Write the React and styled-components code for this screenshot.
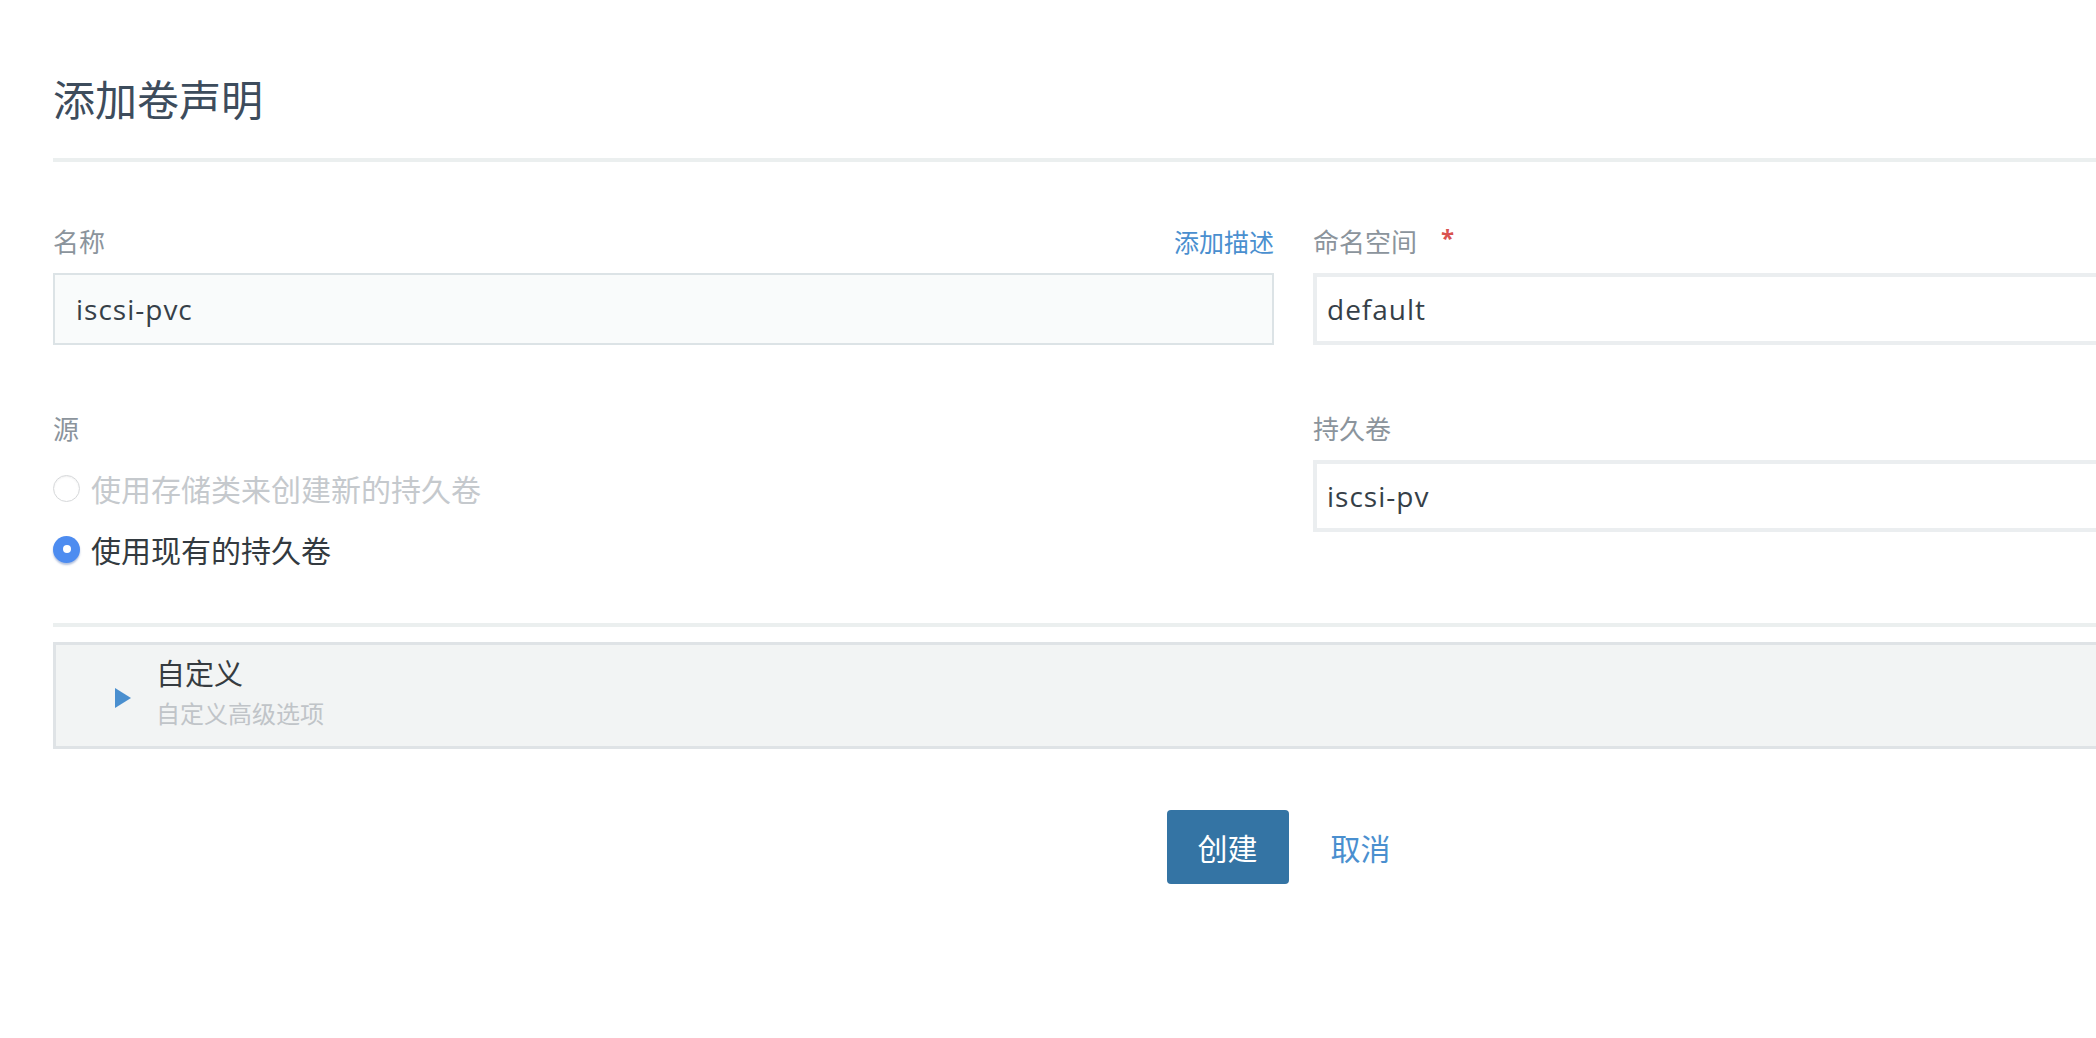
import React from "react";
import styled, { createGlobalStyle } from "styled-components";

const Global = createGlobalStyle`
  html, body { margin: 0; padding: 0; background: #fff; }
  body { overflow: hidden; width: 100vw; font-family: "Open Sans", "Noto Sans CJK SC", sans-serif; }
  #root { width: 100vw; overflow: hidden; }
`;

const CJK = `"Noto Sans CJK SC", "Noto Sans", sans-serif`;

const Page = styled.div`
  width: 2481px;
  padding: 73px 0 120px 53px;
`;

const Title = styled.h1`
  margin: 0;
  font-family: ${CJK};
  font-weight: 400;
  font-size: 42px;
  line-height: 50px;
  color: #3d4c5c;
`;

const Divider = styled.div`
  height: 4px;
  background: #ebefef;
  margin-top: ${(p) => p.$top}px;
`;

const Grid = styled.div`
  display: grid;
  grid-template-columns: 1221px 1221px;
  column-gap: 39px;
  row-gap: ${(p) => p.$rowGap || 0}px;
  margin-top: ${(p) => p.$top || 0}px;
`;

const Field = styled.div`
  display: flex;
  flex-direction: column;
`;

const LabelRow = styled.div`
  display: flex;
  align-items: center;
  justify-content: space-between;
  height: 36px;
  margin-bottom: 14px;
`;

const Label = styled.span`
  font-family: ${CJK};
  font-size: 26px;
  line-height: 36px;
  color: #8b949c;
  display: inline-flex;
  align-items: center;
`;

const Required = styled.span`
  color: #d9534f;
  font-size: 24px;
  margin-left: 24px;
  position: relative;
  top: -3px;
  font-family: "Open Sans", sans-serif;
  font-weight: 700;
`;

const Link = styled.a`
  font-family: ${CJK};
  font-size: ${(p) => p.$size || 25}px;
  line-height: 36px;
  color: #4a8fcf;
  text-decoration: none;
  cursor: pointer;
`;

const Input = styled.div`
  box-sizing: border-box;
  height: 72px;
  display: flex;
  align-items: center;
  font-family: "Open Sans", ${CJK};
  font-size: 28px;
  letter-spacing: 1px;
  color: #363f48;
  border: ${(p) => (p.$soft ? "2px solid #dce3e6" : "4px solid #ebeef0")};
  background: ${(p) => (p.$soft ? "#f9fbfb" : "#ffffff")};
  padding-left: ${(p) => (p.$soft ? 21 : 10)}px;
`;

const RadioList = styled.div`
  display: flex;
  flex-direction: column;
  gap: 17px;
  margin-top: 6px;
`;

const RadioRow = styled.label`
  display: flex;
  align-items: center;
  gap: 11px;
  height: 44px;
  font-family: ${CJK};
  font-size: 30px;
  color: ${(p) => (p.$disabled ? "#c5c9cd" : "#333a40")};
`;

const RadioDot = styled.span`
  box-sizing: border-box;
  width: 27px;
  height: 27px;
  border-radius: 50%;
  flex: none;
  display: flex;
  align-items: center;
  justify-content: center;
  background: ${(p) => (p.$checked ? "#4d8cf0" : "#fff")};
  border: ${(p) => (p.$checked ? "none" : "1.5px solid #d6d8da")};
  box-shadow: ${(p) =>
    p.$checked ? "0 2px 2px rgba(40,80,160,0.35)" : "inset 0 1px 2px rgba(0,0,0,0.06)"};
  &::after {
    content: "";
    display: ${(p) => (p.$checked ? "block" : "none")};
    width: 8px;
    height: 8px;
    border-radius: 50%;
    background: #fff;
  }
`;

const Collapse = styled.div`
  box-sizing: border-box;
  margin-top: 15px;
  height: 107px;
  border: 3px solid #dfe3e6;
  background: #f2f4f4;
  display: flex;
  align-items: center;
  padding-left: 59px;
  gap: 25px;
`;

const Caret = styled.span`
  width: 0;
  height: 0;
  border-top: 10px solid transparent;
  border-bottom: 10px solid transparent;
  border-left: 16px solid #4a8fcf;
  margin-top: 4px;
`;

const CollapseText = styled.div`
  display: flex;
  flex-direction: column;
  gap: 8px;
  margin-bottom: 10px;
`;

const CollapseTitle = styled.span`
  font-family: ${CJK};
  font-size: 29px;
  line-height: 36px;
  color: #363b40;
`;

const CollapseSub = styled.span`
  font-family: ${CJK};
  font-size: 24px;
  line-height: 30px;
  color: #c0c4c8;
`;

const ButtonRow = styled.div`
  display: flex;
  justify-content: center;
  align-items: center;
  gap: 42px;
  margin-top: 61px;
  padding-right: 30px;
`;

const PrimaryButton = styled.button`
  width: 122px;
  height: 74px;
  border: none;
  border-radius: 4px;
  background: #3474a4;
  color: #fff;
  font-family: ${CJK};
  font-size: 30px;
  cursor: pointer;
  padding: 0;
`;

export default function App() {
  return (
    <>
      <Global />
      <Page>
        <Title>添加卷声明</Title>
        <Divider $top={35} />

        <Grid $top={61} $rowGap={65}>
          <Field>
            <LabelRow>
              <Label>名称</Label>
              <Link>添加描述</Link>
            </LabelRow>
            <Input $soft>iscsi-pvc</Input>
          </Field>
          <Field>
            <LabelRow>
              <Label>
                命名空间<Required>*</Required>
              </Label>
            </LabelRow>
            <Input>default</Input>
          </Field>

          <Field>
            <LabelRow>
              <Label>源</Label>
            </LabelRow>
            <RadioList>
              <RadioRow $disabled>
                <RadioDot />
                使用存储类来创建新的持久卷
              </RadioRow>
              <RadioRow>
                <RadioDot $checked />
                使用现有的持久卷
              </RadioRow>
            </RadioList>
          </Field>
          <Field>
            <LabelRow>
              <Label>持久卷</Label>
            </LabelRow>
            <Input>iscsi-pv</Input>
          </Field>
        </Grid>

        <Divider $top={52} />

        <Collapse>
          <Caret />
          <CollapseText>
            <CollapseTitle>自定义</CollapseTitle>
            <CollapseSub>自定义高级选项</CollapseSub>
          </CollapseText>
        </Collapse>

        <ButtonRow>
          <PrimaryButton>创建</PrimaryButton>
          <Link $size={30}>取消</Link>
        </ButtonRow>
      </Page>
    </>
  );
}
